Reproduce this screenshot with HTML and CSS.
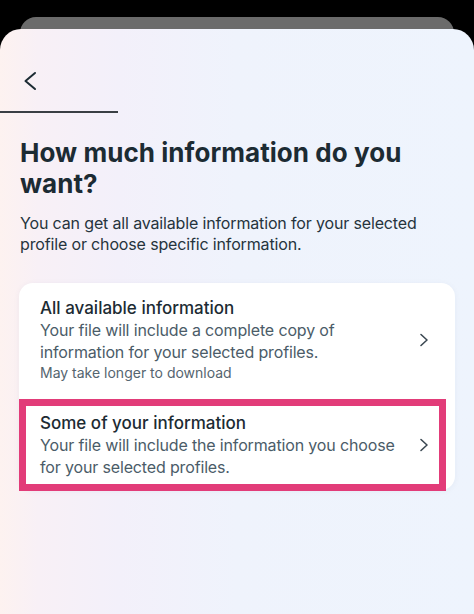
FILE: index.html
```html
<!DOCTYPE html>
<html lang="en">
<head>
<meta charset="utf-8">
<title>How much information do you want?</title>
<link rel="stylesheet" href="styles.css">
</head>
<body>
<div class="screen">
  <div class="behind"></div>
  <div class="sheet">
    <div class="topbar">
      <svg class="back" width="14" height="20" viewBox="0 0 14 20" aria-label="Back">
        <path d="M12 2 L2.5 10 L12 18" fill="none" stroke="#1c2b33" stroke-width="2" stroke-linecap="round" stroke-linejoin="round"/>
      </svg>
    </div>
    <div class="rule"></div>
    <h1 class="heading">How much information do you want?</h1>
    <p class="intro">You can get all available information for your selected profile or choose specific information.</p>
    <div class="card">
      <div class="item">
        <div class="text">
          <div class="title">All available information</div>
          <div class="desc">Your file will include a complete copy of information for your selected profiles.</div>
          <div class="note">May take longer to download</div>
        </div>
        <svg class="chev" width="10" height="14" viewBox="0 0 10 14"><path d="M2 1.5 L8 7 L2 12.5" fill="none" stroke="#3b4852" stroke-width="1.6" stroke-linecap="round" stroke-linejoin="round"/></svg>
      </div>
      <div class="item item-two">
        <div class="text">
          <div class="title">Some of your information</div>
          <div class="desc">Your file will include the information you choose for your selected profiles.</div>
        </div>
        <svg class="chev" width="10" height="14" viewBox="0 0 10 14"><path d="M2 1.5 L8 7 L2 12.5" fill="none" stroke="#3b4852" stroke-width="1.6" stroke-linecap="round" stroke-linejoin="round"/></svg>
        <div class="highlight"></div>
      </div>
    </div>
  </div>
</div>
</body>
</html>
```

FILE: styles.css
```css
html, body {
  margin: 0;
  padding: 0;
  background: #000;
}
body {
  width: 474px;
  height: 614px;
  overflow: hidden;
  font-family: "Inter", "Noto Sans", sans-serif;
  color: #1c2b33;
}
.screen {
  padding-top: 17px;
}
.behind {
  height: 30px;
  margin: 0 20px;
  background: #6b6b6b;
  border-radius: 16px 16px 0 0;
}
.sheet {
  position: relative;
  z-index: 1;
  margin-top: -18px;
  height: 585px;
  border-radius: 21px 21px 0 0;
  background: linear-gradient(90deg, #fdf2f0 0%, #f8f0f6 8%, #f3f0fa 25%, #eff3fc 50%, #eef4fd 100%);
}
.topbar {
  height: 61px;
  padding: 42px 0 0 23px;
  box-sizing: border-box;
}
.back {
  display: block;
}
.rule {
  width: 118px;
  height: 2px;
  margin-top: 21px;
  background: #3a3f44;
}
.heading {
  margin: 24px 20px 0;
  font-size: 26px;
  line-height: 31px;
  font-weight: 700;
  letter-spacing: 0.05px;
  color: #1c2b33;
}
.intro {
  margin: 14px 20px 0;
  font-size: 16px;
  line-height: 21px;
  letter-spacing: -0.15px;
  color: #26343d;
}
.card {
  margin: 28px 19px 0;
  background: #fff;
  border-radius: 14px;
  box-shadow: 0 1px 6px rgba(40, 60, 90, 0.05);
}
.item {
  display: flex;
  align-items: center;
  padding: 14px 26px 15px 21px;
}
.item-two {
  position: relative;
  padding-bottom: 12px;
}
.text {
  flex: 1;
  min-width: 0;
}
.title {
  font-size: 17px;
  line-height: 22px;
  font-weight: 500;
  color: #1c2b33;
}
.desc {
  font-size: 16px;
  line-height: 22px;
  letter-spacing: -0.15px;
  color: #4b5c68;
}
.note {
  font-size: 14px;
  line-height: 20px;
  color: #55656f;
}
.chev {
  flex: none;
  margin-left: 14px;
}
.highlight {
  position: absolute;
  left: 0;
  top: 1px;
  width: 427px;
  height: 92px;
  box-sizing: border-box;
  border: 7px solid #e23c79;
  pointer-events: none;
}
```
